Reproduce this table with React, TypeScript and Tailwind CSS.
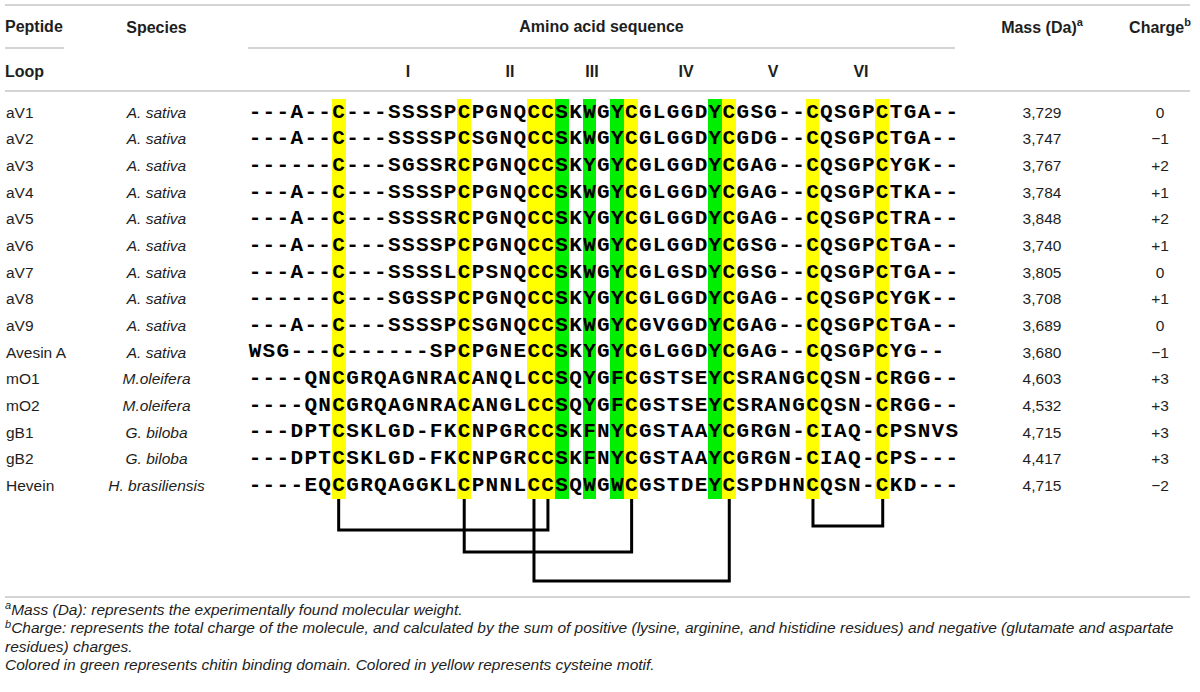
const ROWS: [string, string, string, string, string][] = [
  ['aV1', 'A. sativa', '---A--C---SSSSPCPGNQCCSKWGYCGLGGDYCGSG--CQSGPCTGA--', '3,729', '0'],
  ['aV2', 'A. sativa', '---A--C---SSSSPCSGNQCCSKWGYCGLGGDYCGDG--CQSGPCTGA--', '3,747', '−1'],
  ['aV3', 'A. sativa', '------C---SGSSRCPGNQCCSKYGYCGLGGDYCGAG--CQSGPCYGK--', '3,767', '+2'],
  ['aV4', 'A. sativa', '---A--C---SSSSPCPGNQCCSKWGYCGLGGDYCGAG--CQSGPCTKA--', '3,784', '+1'],
  ['aV5', 'A. sativa', '---A--C---SSSSRCPGNQCCSKYGYCGLGGDYCGAG--CQSGPCTRA--', '3,848', '+2'],
  ['aV6', 'A. sativa', '---A--C---SSSSPCPGNQCCSKWGYCGLGGDYCGSG--CQSGPCTGA--', '3,740', '+1'],
  ['aV7', 'A. sativa', '---A--C---SSSSLCPSNQCCSKWGYCGLGSDYCGSG--CQSGPCTGA--', '3,805', '0'],
  ['aV8', 'A. sativa', '------C---SGSSPCPGNQCCSKYGYCGLGGDYCGAG--CQSGPCYGK--', '3,708', '+1'],
  ['aV9', 'A. sativa', '---A--C---SSSSPCSGNQCCSKWGYCGVGGDYCGAG--CQSGPCTGA--', '3,689', '0'],
  ['Avesin A', 'A. sativa', 'WSG---C------SPCPGNECCSKYGYCGLGGDYCGAG--CQSGPCYG--', '3,680', '−1'],
  ['mO1', 'M.oleifera', '----QNCGRQAGNRACANQLCCSQYGFCGSTSEYCSRANGCQSN-CRGG--', '4,603', '+3'],
  ['mO2', 'M.oleifera', '----QNCGRQAGNRACANGLCCSQYGFCGSTSEYCSRANGCQSN-CRGG--', '4,532', '+3'],
  ['gB1', 'G. biloba', '---DPTCSKLGD-FKCNPGRCCSKFNYCGSTAAYCGRGN-CIAQ-CPSNVS', '4,715', '+3'],
  ['gB2', 'G. biloba', '---DPTCSKLGD-FKCNPGRCCSKFNYCGSTAAYCGRGN-CIAQ-CPS---', '4,417', '+3'],
  ['Hevein', 'H. brasiliensis', '----EQCGRQAGGKLCPNNLCCSQWGWCGSTDEYCSPDHNCQSN-CKD---', '4,715', '−2'],
];

// cysteine motif columns (yellow) and chitin binding columns (green)
const YELLOW = [6, 15, 20, 21, 27, 34, 40, 45];
const GREEN = [22, 24, 26, 33];

const CW = 13.95;
const cx = (i: number) => (i + 0.5) * CW;

// disulfide bonds: [from, to, depth]
const BONDS: [number, number, number][] = [
  [6, 21, 31],
  [15, 27, 53],
  [20, 34, 82],
  [40, 45, 27],
];

function Sequence({ seq }: { seq: string }) {
  return (
    <div className="flex h-full">
      {seq.split('').map((ch, i) => {
        const bg = YELLOW.includes(i) ? 'bg-[#ffff00]' : GREEN.includes(i) ? 'bg-[#00ee00]' : '';
        return (
          <span key={i} className={`w-[13.95px] shrink-0 h-full flex items-center justify-center ${bg}`}>
            {ch}
          </span>
        );
      })}
    </div>
  );
}

export default function App() {
  return (
    <div className="w-[1200px] h-[692px] bg-white overflow-hidden px-[5px] pt-[4px] text-[#1e1e1e]" style={{ fontFamily: '"Liberation Sans", Arial, sans-serif' }}>
      <div className="w-[1185px]">
        <div className="border-t-2 border-[#d4d4d4]" />

        {/* header row 1 */}
        <div className="flex h-[43px] text-[16px] font-bold">
          <div className="w-[100px] flex">
            <div className="flex items-center border-b-2 border-[#d4d4d4] pr-[1px]">Peptide</div>
          </div>
          <div className="w-[103px] flex items-center justify-center">Species</div>
          <div className="w-[40px]" />
          <div className="w-[714px]">
            <div className="w-[707px] h-full flex items-center justify-center border-b-2 border-[#d4d4d4]">Amino acid sequence</div>
          </div>
          <div className="w-[20px]" />
          <div className="w-[120px] flex items-center justify-center">
            Mass (Da)<sup className="text-[11px] -top-[6px]">a</sup>
          </div>
          <div className="w-[28px]" />
          <div className="w-[60px] flex items-center justify-center">
            Charge<sup className="text-[11px] -top-[6px]">b</sup>
          </div>
        </div>

        {/* header row 2 */}
        <div className="flex h-[43px] pt-[4px] text-[16px] font-bold border-b-2 border-[#d4d4d4]">
          <div className="w-[100px] flex items-center">Loop</div>
          <div className="w-[143px]" />
          <div className="w-[714px] flex items-center">
            <span className="ml-[140px] w-[40px] text-center">I</span>
            <span className="ml-[62px] w-[40px] text-center">II</span>
            <span className="ml-[42px] w-[40px] text-center">III</span>
            <span className="ml-[54px] w-[40px] text-center">IV</span>
            <span className="ml-[47px] w-[40px] text-center">V</span>
            <span className="ml-[48px] w-[40px] text-center">VI</span>
          </div>
        </div>

        {/* body */}
        <div className="pt-[7px]">
          {ROWS.map(([name, species, seq, mass, charge]) => (
            <div key={name} className="flex h-[26.67px] text-[15.5px]">
              <div className="w-[100px] flex items-center pl-[1px]">{name}</div>
              <div className="w-[103px] flex items-center justify-center italic whitespace-nowrap">{species}</div>
              <div className="w-[40px]" />
              <div className="w-[714px] h-full font-bold text-[21px] text-black" style={{ fontFamily: '"Liberation Mono", "Courier New", monospace' }}>
                <Sequence seq={seq} />
              </div>
              <div className="w-[20px]" />
              <div className="w-[120px] flex items-center justify-center">{mass}</div>
              <div className="w-[28px]" />
              <div className="w-[60px] flex items-center justify-center">{charge}</div>
            </div>
          ))}
        </div>

        {/* disulfide bonds */}
        <div className="flex h-[90px]">
          <div className="w-[243px]" />
          <svg width="714" height="90" viewBox="0 0 714 90">
            {BONDS.map(([a, b, d]) => (
              <polyline
                key={a}
                points={`${cx(a)},0 ${cx(a)},${d} ${cx(b)},${d} ${cx(b)},0`}
                fill="none"
                stroke="#000"
                strokeWidth="3"
              />
            ))}
          </svg>
        </div>

        <div className="mt-[7px] border-t-2 border-[#d4d4d4]" />

        <div className="pt-[3px] text-[15.5px] italic leading-[18.5px] text-[#1e1e1e]">
          <p>
            <sup className="text-[11px]">a</sup>Mass (Da): represents the experimentally found molecular weight.
          </p>
          <p>
            <sup className="text-[11px]">b</sup>Charge: represents the total charge of the molecule, and calculated by the sum of positive (lysine, arginine, and histidine residues) and negative (glutamate and aspartate residues) charges.
          </p>
          <p>Colored in green represents chitin binding domain. Colored in yellow represents cysteine motif.</p>
        </div>
      </div>
    </div>
  );
}
